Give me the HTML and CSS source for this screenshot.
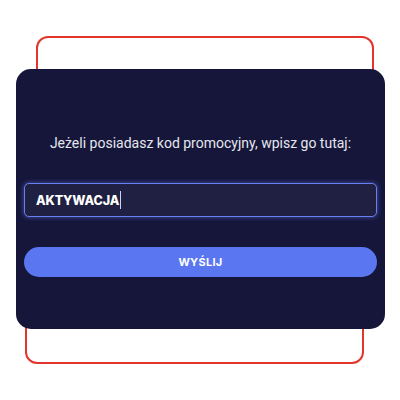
FILE: index.html
```html
<!DOCTYPE html>
<html lang="pl">
<head>
<meta charset="utf-8">
<link rel="stylesheet" href="styles.css">
</head>
<body>
<div class="stage">
  <div class="frame frame-top"></div>
  <div class="frame frame-bottom"></div>
  <div class="card">
    <p class="lead">Jeżeli posiadasz kod promocyjny, wpisz go tutaj:</p>
    <div class="field"><span class="value">AKTYWACJA</span><span class="caret"></span></div>
    <button class="submit">WYŚLIJ</button>
  </div>
</div>
</body>
</html>
```
FILE: styles.css
```css
html, body {
  margin: 0;
  padding: 0;
  background: #ffffff;
}
.stage {
  position: relative;
  width: 400px;
  height: 400px;
  padding-top: 69px;
  box-sizing: border-box;
}
.frame {
  position: absolute;
  border: 2.5px solid #e2352b;
  box-sizing: border-box;
  border-radius: 12px;
}
.frame-top {
  left: 36px;
  top: 36px;
  width: 338px;
  height: 120px;
}
.frame-bottom {
  left: 25px;
  top: 260px;
  width: 339px;
  height: 104px;
}
.card {
  position: relative;
  margin-left: 16px;
  width: 369px;
  height: 260px;
  box-sizing: border-box;
  background: #15163a;
  border-radius: 15px;
  padding: 64px 8px 0;
  display: flex;
  flex-direction: column;
  font-family: "Inter", "Noto Sans", sans-serif;
}
.lead {
  margin: 0;
  height: 20px;
  line-height: 20px;
  text-align: center;
  color: #e6e6ee;
  font-family: "Roboto", "Noto Sans", sans-serif;
  font-size: 14px;
  font-weight: 400;
}
.field {
  margin-top: 30px;
  height: 34px;
  box-sizing: border-box;
  border: 1.5px solid #6b7ef0;
  border-radius: 5px;
  background: #202142;
  box-shadow: 0 0 4px 1px rgba(98, 118, 240, 0.45);
  display: flex;
  align-items: center;
  padding-left: 11px;
}
.value {
  color: #ffffff;
  font-weight: 800;
  font-size: 12.5px;
  letter-spacing: -0.1px;
}
.caret {
  width: 1px;
  height: 18px;
  margin-left: 1px;
  background: #c9d0ff;
}
.submit {
  margin-top: 30px;
  height: 30px;
  border: none;
  border-radius: 15px;
  background: #5a77f1;
  color: #ffffff;
  font-family: inherit;
  font-weight: 700;
  font-size: 11px;
  letter-spacing: 0.3px;
  padding: 0;
}
```
